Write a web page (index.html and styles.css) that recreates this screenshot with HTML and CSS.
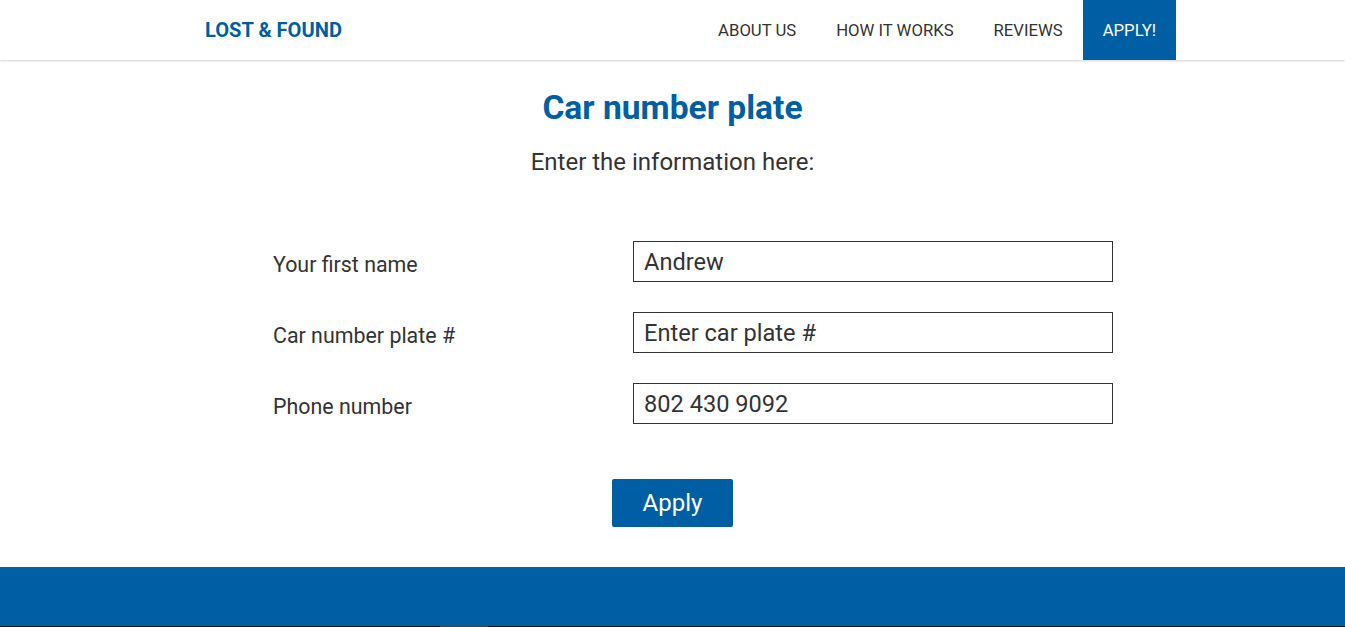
FILE: index.html
```html
<!DOCTYPE html>
<html lang="en">
<head>
<meta charset="utf-8">
<title>Lost &amp; Found - Car number plate</title>
<link rel="stylesheet" href="styles.css">
</head>
<body>
<header class="site-header">
  <div class="header-inner">
    <a class="logo" href="#">LOST &amp; FOUND</a>
    <nav class="nav">
      <a class="nav-item" href="#">ABOUT US</a>
      <a class="nav-item" href="#">HOW IT WORKS</a>
      <a class="nav-item" href="#">REVIEWS</a>
      <a class="nav-item nav-apply" href="#">APPLY!</a>
    </nav>
  </div>
</header>
<main class="main">
  <h1 class="title">Car number plate</h1>
  <p class="subtitle">Enter the information here:</p>
  <form class="form">
    <div class="row">
      <label class="label" for="fn">Your first name</label>
      <input class="input" id="fn" type="text" value="Andrew">
    </div>
    <div class="row">
      <label class="label" for="cp">Car number plate #</label>
      <input class="input" id="cp" type="text" placeholder="Enter car plate #">
    </div>
    <div class="row">
      <label class="label" for="ph">Phone number</label>
      <input class="input" id="ph" type="text" value="802 430 9092">
    </div>
    <div class="actions">
      <button class="btn" type="button">Apply</button>
    </div>
  </form>
</main>
<footer class="footer"></footer>
<div class="under"><span class="under-mark"></span></div>
</body>
</html>
```
FILE: styles.css
```css
* { box-sizing: border-box; }
html, body { margin: 0; padding: 0; }
body {
  font-family: Roboto, "Liberation Sans", Arial, sans-serif;
  color: #333;
  background: #fff;
  overflow: hidden;
}
.site-header {
  height: 60px;
  background: #fff;
  box-shadow: 0 1px 2px rgba(0,0,0,0.18);
  position: relative;
  z-index: 1;
}
.header-inner {
  height: 60px;
  display: flex;
  align-items: center;
  justify-content: space-between;
  margin: 0 169px 0 205px;
}
.logo {
  color: #005ea5;
  font-weight: 700;
  font-size: 20.1px;
  text-decoration: none;
}
.nav { display: flex; height: 60px; }
.nav-item {
  display: flex;
  align-items: center;
  padding: 0 20px;
  height: 60px;
  font-size: 16.7px;
  color: #333;
  text-decoration: none;
}
.nav-apply { background: #005ea5; color: #fff; }
.main { padding-top: 26px; }
.title {
  margin: 0;
  text-align: center;
  font-size: 33.6px;
  line-height: 44px;
  font-weight: 700;
  color: #005ea5;
}
.subtitle {
  margin: 16px 0 0;
  text-align: center;
  font-size: 24px;
  line-height: 32px;
}
.form {
  width: 840px;
  margin: 63px 0 0 273px;
}
.row {
  display: flex;
  align-items: center;
  height: 41px;
  margin-bottom: 30px;
}
.label {
  width: 360px;
  font-size: 21.4px;
  padding-top: 6px;
}
.input {
  width: 480px;
  height: 41px;
  border: 1px solid #333;
  border-radius: 0;
  padding: 0 10px;
  font-family: inherit;
  font-size: 23.6px;
  color: #333;
  outline: none;
}
.input::placeholder { color: #333; opacity: 1; }
.actions {
  display: flex;
  justify-content: center;
  margin: 55px 0 0 -273px;
  width: 1345px;
}
.btn {
  width: 121px;
  height: 48px;
  background: #005ea5;
  color: #fff;
  border: 0;
  border-radius: 2px;
  font-family: inherit;
  font-size: 24px;
  padding: 0;
}
.footer {
  margin-top: 40px;
  height: 59px;
  background: #005ea5;
}
.under {
  height: 20px;
  background: #111;
  position: relative;
}
.under-mark {
  position: absolute;
  left: 440px;
  top: 0;
  width: 48px;
  height: 20px;
  background: #444;
}
```
